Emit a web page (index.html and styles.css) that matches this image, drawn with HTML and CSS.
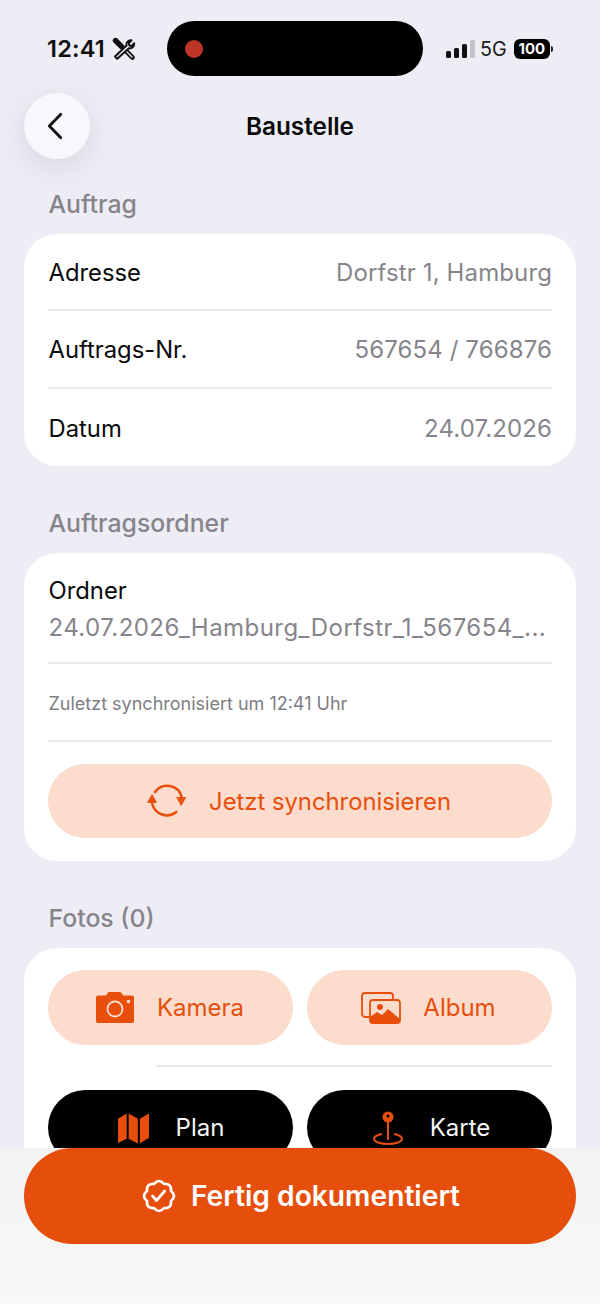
FILE: index.html
```html
<!DOCTYPE html>
<html lang="de">
<head>
<meta charset="utf-8">
<title>Baustelle</title>
<link rel="stylesheet" href="styles.css">
</head>
<body>
<div class="page">
  <header class="status">
    <div class="status-left">
      <span class="time">12:41</span>
      <svg class="tools" viewBox="0 0 24 24" fill="none" stroke="#111" stroke-width="2" stroke-linecap="round" stroke-linejoin="round"><path d="M10 10 20.500 20.500" stroke-width="4.600"/><path d="M10.500 10.500 20 20" stroke="#eeedf6" stroke-width="1.200"/><path d="M3.500 3.500 9 9" stroke-width="5.400"/><path d="M3 19.500 14.500 8.600c-.7-2.600 1.400-5.700 5-5.300l-2.700 2.800.5 2.300 2.300.5 2.600-2.700c.5 3.400-2.700 5.600-5.300 5L5.200 21.800z" fill="#eeedf6"/></svg>
    </div>
    <div class="island"><span class="island-dot"></span></div>
    <div class="status-right">
      <span class="signal"><i class="b1"></i><i class="b2"></i><i class="b3"></i><i class="b4"></i></span>
      <span class="net">5G</span>
      <span class="battery">100</span><span class="battery-tip"></span>
    </div>
  </header>

  <nav class="nav">
    <div class="back">
      <svg viewBox="0 0 24 34" width="21" height="30" fill="none" stroke="#111" stroke-width="3.200" stroke-linecap="round" stroke-linejoin="round"><path d="M18 3.500 5 17l13 13.500"/></svg>
    </div>
    <h1 class="title">Baustelle</h1>
  </nav>

  <main class="content">
    <section class="section">
      <h2 class="section-title">Auftrag</h2>
      <div class="card">
        <div class="row"><span>Adresse</span><span class="value">Dorfstr 1, Hamburg</span></div>
        <div class="row row-line"><span>Auftrags-Nr.</span><span class="value">567654 / 766876</span></div>
        <div class="row row-line"><span>Datum</span><span class="value">24.07.2026</span></div>
      </div>
    </section>

    <section class="section">
      <h2 class="section-title">Auftragsordner</h2>
      <div class="card card-pad">
        <div class="folder">
          <div>Ordner</div>
          <div class="folder-path">24.07.2026_Hamburg_Dorfstr_1_567654_...</div>
        </div>
        <div class="sync-note">Zuletzt synchronisiert um 12:41 Uhr</div>
        <div class="sync-wrap">
          <button class="btn btn-soft btn-wide">
            <svg class="ico" viewBox="0 0 40 40" width="40" height="40" fill="none" stroke="#e84e0c" stroke-width="2.600" stroke-linecap="round"><path d="M8 11a15 15 0 0 1 26.700 5"/><path d="M5.300 23a15 15 0 0 0 24 8"/><path d="M30.200 16.500h8.400l-4.200 7.600z" fill="#e84e0c" stroke-width="1" stroke-linejoin="round"/><path d="M1 21.500h8.400L5.200 14z" fill="#e84e0c" stroke-width="1" stroke-linejoin="round"/></svg>
            <span>Jetzt synchronisieren</span>
          </button>
        </div>
      </div>
    </section>

    <section class="section">
      <h2 class="section-title">Fotos (0)</h2>
      <div class="card card-photos">
        <div class="btn-row">
          <button class="btn btn-soft">
            <svg class="ico" viewBox="0 0 40 32" width="40" height="32"><path fill="#e84e0c" d="M3 3.500h8l2.500-3.500h12l3 3.500H37a2 2 0 0 1 2 2V29a2 2 0 0 1-2 2H3a2 2 0 0 1-2-2V5.500a2 2 0 0 1 2-2z"/><circle cx="20" cy="17" r="7.500" fill="none" stroke="#fbdccd" stroke-width="1.800"/><circle cx="33.500" cy="9.500" r="1.800" fill="#fbdccd"/></svg>
            <span>Kamera</span>
          </button>
          <button class="btn btn-soft">
            <svg class="ico" viewBox="0 0 40 32" width="40" height="32" fill="none" stroke="#e84e0c" stroke-width="1.800"><path d="M9 25H4a3 3 0 0 1-3-3V4a3 3 0 0 1 3-3h25a3 3 0 0 1 3 3v3"/><rect x="9" y="8" width="30" height="23" rx="3"/><circle cx="19" cy="15" r="3" fill="#e84e0c" stroke="none"/><path fill="#e84e0c" stroke="none" d="M9 31v-6l7-5 5 3 6-6 12 10v4z"/></svg>
            <span>Album</span>
          </button>
        </div>
        <div class="photo-line"></div>
        <div class="btn-row">
          <button class="btn btn-dark">
            <svg class="ico" viewBox="0 0 34 32" width="33" height="32" fill="#e84e0c"><path d="M1 6.500 10 1v26l-9 4.500z"/><path d="M12 1l9.500 5.500V32L12 27z"/><path d="M23.500 6.500 33 1v25l-9.500 6z"/></svg>
            <span>Plan</span>
          </button>
          <button class="btn btn-dark btn-karte">
            <svg class="ico" viewBox="0 0 30 34" width="30" height="34" fill="none" stroke="#e84e0c" stroke-width="2"><circle cx="15" cy="6" r="4.500" fill="#e84e0c"/><circle cx="15" cy="5" r="1.500" fill="#000" stroke="none"/><path d="M15 10v18" stroke-linecap="round"/><path d="M9 23c-4.500.8-8 2.600-8 5 0 2.800 6.300 5 14 5s14-2.200 14-5c0-2.400-3.500-4.200-8-5"/></svg>
            <span>Karte</span>
          </button>
        </div>
      </div>
    </section>
  </main>

  <footer class="footer">
    <button class="done">
      <svg viewBox="0 0 34 34" width="34" height="34" fill="none" stroke="#fff" stroke-width="2.700" stroke-linejoin="round" stroke-linecap="round"><path d="M12.030 4.990Q17-1 21.970 4.990 29.730 4.270 29.010 12.030 35 17 29.010 21.970 29.730 29.730 21.970 29.010 17 35 12.030 29.010 4.270 29.730 4.990 21.970-1 17 4.990 12.030 4.270 4.270 12.030 4.990z"/><path d="m10.500 17 4 4.500 8.200-9.500"/></svg>
      <span>Fertig dokumentiert</span>
    </button>
  </footer>
</div>
</body>
</html>
```

FILE: styles.css
```css
* { box-sizing: border-box; }

html, body {
  margin: 0;
  padding: 0;
}

body {
  font-family: Inter, "Liberation Sans", sans-serif;
  color: #0a0a0a;
  background: #eeedf6;
}

.page {
  position: relative;
  width: 600px;
  height: 1304px;
  overflow: hidden;
  background: #eeedf6;
}

/* Status bar */
.status {
  display: grid;
  grid-template-columns: 167px 256px 177px;
  padding-top: 21px;
  height: 93px;
}

.status-left {
  display: flex;
  align-items: center;
  height: 55px;
  padding-left: 47px;
  gap: 7px;
}

.time {
  font-size: 23.500px;
  font-weight: 600;
  letter-spacing: 0.2px;
  color: #111;
}

.tools {
  width: 24px;
  height: 24px;
}

.island {
  display: flex;
  align-items: center;
  height: 55px;
  padding-left: 18px;
  border-radius: 28px;
  background: #000;
}

.island-dot {
  width: 18px;
  height: 18px;
  border-radius: 50%;
  background: #bd3527;
}

.status-right {
  display: flex;
  align-items: center;
  height: 55px;
  padding-left: 23px;
}

.signal {
  display: flex;
  align-items: flex-end;
  gap: 3px;
  height: 18px;
  margin-right: 8px;
}

.signal i {
  display: block;
  width: 5px;
  border-radius: 1.5px;
  background: #111;
}

.signal .b1 { height: 7px; }
.signal .b2 { height: 10px; }
.signal .b3 { height: 14px; }
.signal .b4 { height: 18px; background: #c4c3ca; }

.net {
  font-size: 19.800px;
  font-weight: 400;
  color: #1c1c1c;
  margin-left: -3px;
  margin-right: 7px;
}

.battery {
  display: flex;
  align-items: center;
  justify-content: center;
  width: 36px;
  height: 20px;
  border-radius: 6px;
  background: #000;
  color: #fff;
  font-size: 15px;
  font-weight: 700;
}

.battery-tip {
  width: 2px;
  height: 6px;
  margin-left: 1px;
  border-radius: 0 2px 2px 0;
  background: #222;
}

/* Navigation */
.nav {
  position: relative;
  display: flex;
  align-items: center;
  justify-content: center;
  height: 66px;
  margin-bottom: 29px;
}

.back {
  position: absolute;
  left: 24px;
  top: 0;
  display: flex;
  align-items: center;
  justify-content: center;
  padding-right: 3px;
  width: 66px;
  height: 66px;
  border-radius: 50%;
  background: #f8f8fc;
  box-shadow: 0 8px 32px rgba(0, 0, 0, 0.1);
}

.title {
  margin: 0;
  font-size: 24.300px;
  font-weight: 600;
  color: #0a0a0a;
}

/* Content */
.content {
  display: flex;
  flex-direction: column;
  gap: 41px;
  padding: 0 24px;
}

.section-title {
  margin: 0 0 15px 24.500px;
  height: 31px;
  line-height: 33px;
  font-size: 24.800px;
  font-weight: 550;
  color: #85858b;
}

.card {
  background: #fff;
  border-radius: 33px;
  padding: 0 24px;
  font-size: 23.800px;
}

.row {
  display: flex;
  align-items: center;
  justify-content: space-between;
  height: 78px;
  padding-top: 1px;
}

.row:first-child {
  height: 75px;
  padding-top: 2px;
}

.row:last-child {
  height: 79px;
}

.row span:first-child {
  margin-left: 0.5px;
}

.row-line {
  border-top: 2px solid #e9e9eb;
}

.value {
  font-size: 24px;
  color: #85858b;
  letter-spacing: 0.12px;
}

.folder {
  height: 109px;
  padding-top: 19px;
  padding-left: 0.5px;
  line-height: 37px;
}

.folder-path {
  font-size: 24px;
  color: #85858b;
  white-space: nowrap;
  letter-spacing: 0.45px;
}

.sync-note {
  display: flex;
  align-items: center;
  height: 80px;
  padding-left: 0.5px;
  padding-top: 2px;
  border-top: 2px solid #e9e9eb;
  border-bottom: 2px solid #e9e9eb;
  font-size: 18px;
  color: #7d7d82;
}

.sync-wrap {
  padding: 22px 0 23px;
}

.card-photos {
  height: 300px;
  padding-top: 22px;
}

.photo-line {
  height: 2px;
  margin: 20px 0 23px 108px;
  background: #e9e9eb;
}

/* Buttons */
.btn-row {
  display: grid;
  grid-template-columns: 245px 245px;
  gap: 14px;
}

.btn {
  display: flex;
  align-items: center;
  justify-content: center;
  gap: 22px;
  height: 75px;
  padding: 0 2px 0 0;
  border: 0;
  border-radius: 38px;
  font: inherit;
  font-size: 24px;
}

.btn-soft {
  background: #fbdccd;
  color: #e84e0c;
}

.btn-dark {
  gap: 26px;
  padding: 0;
  background: #000;
  color: #f5f5f5;
}

.btn-karte {
  gap: 27px;
  padding-left: 4px;
}

.btn-wide {
  width: 100%;
  height: 74px;
  font-size: 23.800px;
}

.ico {
  flex: none;
}

/* Footer */
.footer {
  position: absolute;
  left: 0;
  right: 0;
  bottom: 0;
  height: 156px;
  padding: 0 24px;
  background: linear-gradient(180deg, #f3f3f4 0%, #f8f8f9 100%);
}

.done {
  display: flex;
  align-items: center;
  justify-content: center;
  gap: 15px;
  width: 100%;
  height: 96px;
  padding: 0 0 0 2px;
  border: 0;
  border-radius: 48px;
  background: #e64e0b;
  color: #fff;
  font: inherit;
  font-size: 28.200px;
  font-weight: 600;
}
```
